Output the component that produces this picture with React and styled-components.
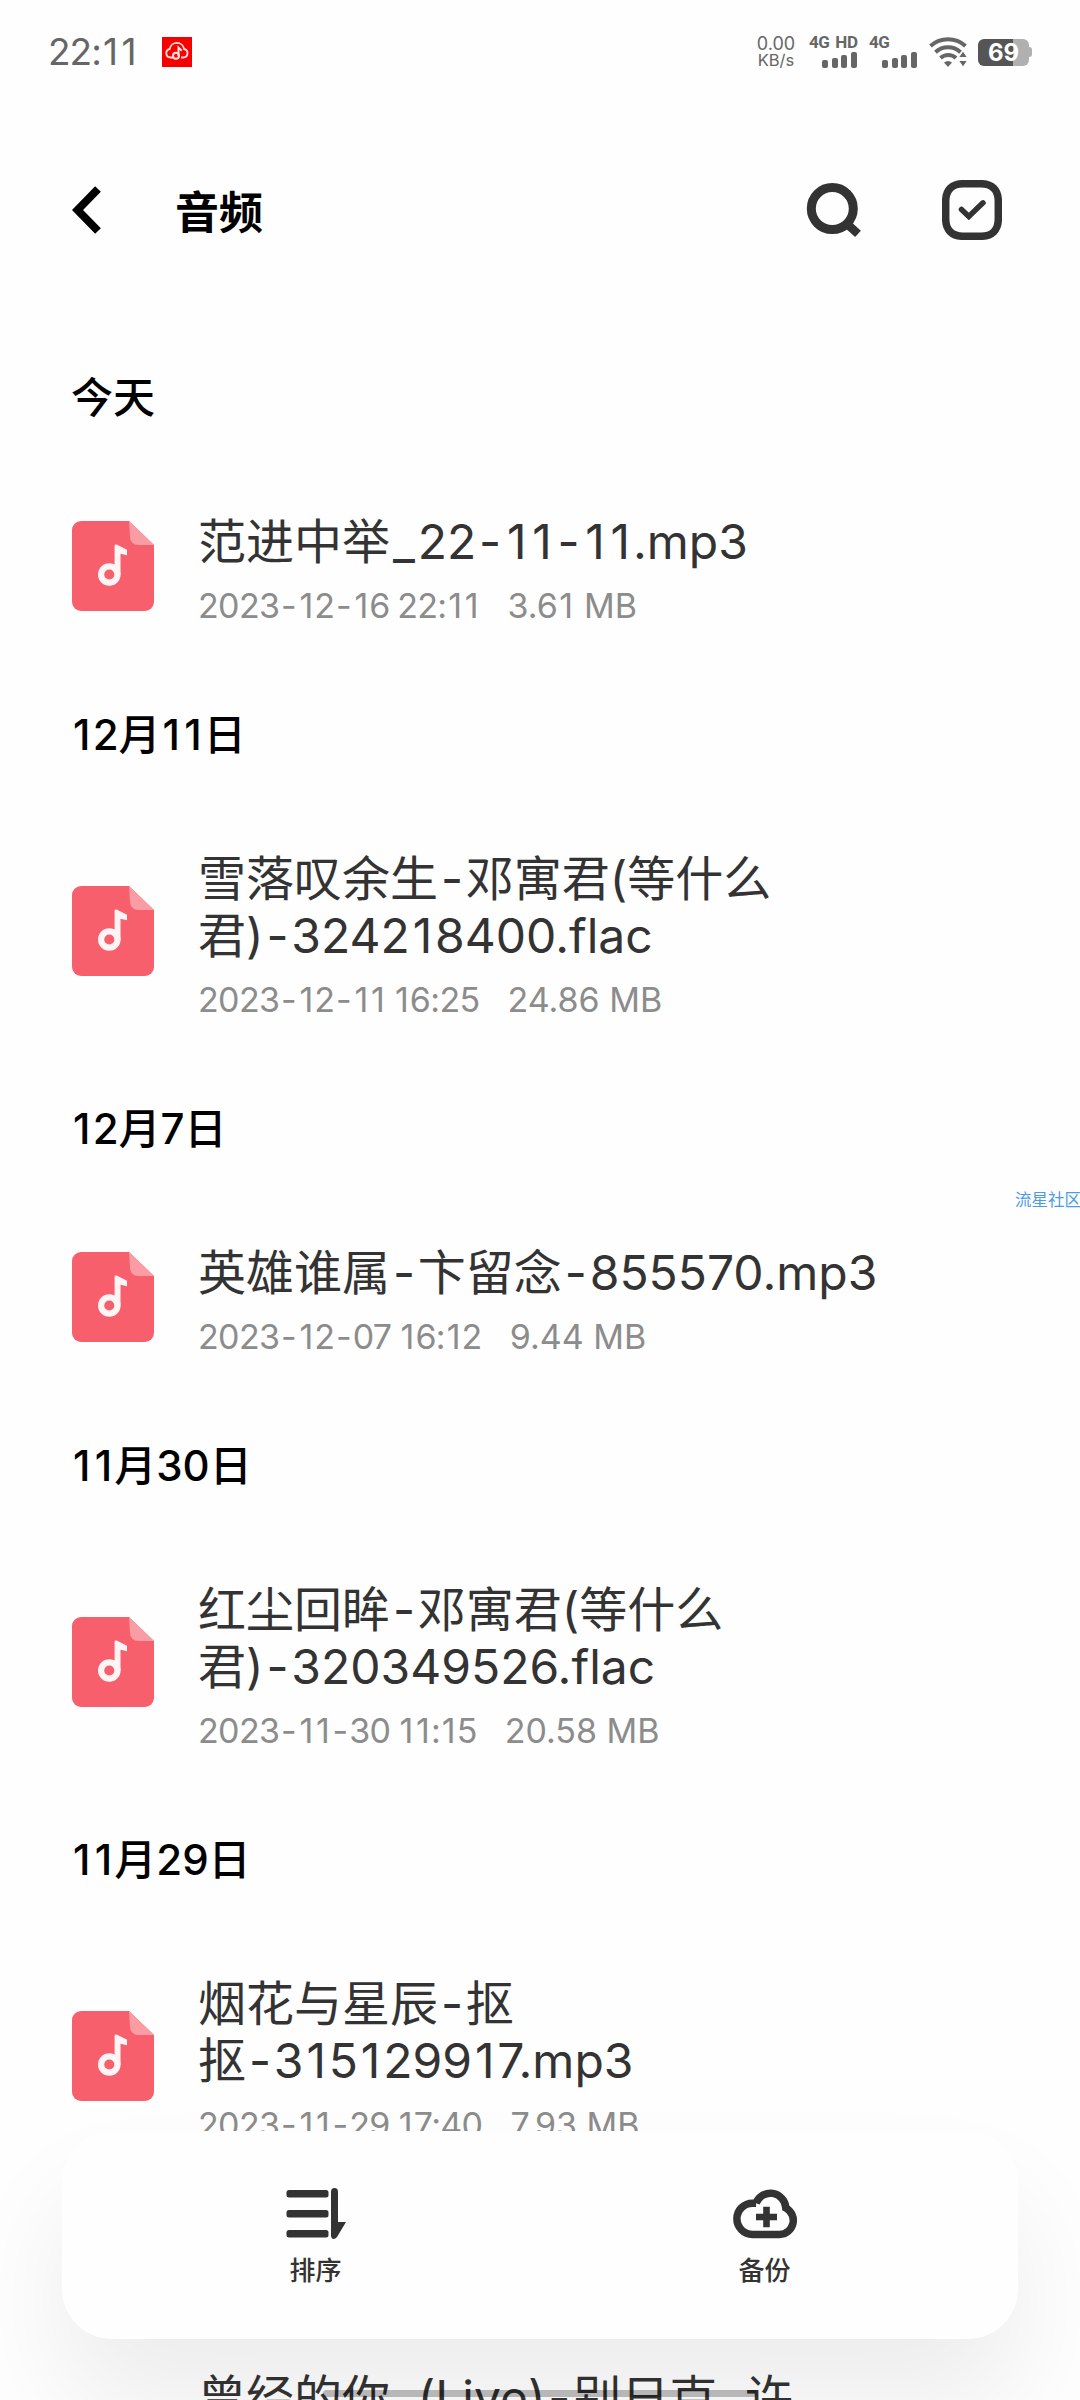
import React from 'react';
import styled, { createGlobalStyle } from 'styled-components';

const GlobalStyle = createGlobalStyle`
    * {
        box-sizing: border-box;
    }
    body {
        margin: 0;
        background-color: #fefefe;
        font-family: Inter, "Noto Sans CJK SC", sans-serif;
    }
`;

const Screen = styled.div`
    position: relative;
    width: 1080px;
    height: 2400px;
    overflow: hidden;
    display: flex;
    flex-direction: column;
    background-color: #fefefe;
`;

const StatusBar = styled.div`
    height: 104px;
    flex: none;
    padding: 0 48px 0 48px;
    display: flex;
    align-items: center;
    justify-content: space-between;
    color: #666;
`;

const StatusGroup = styled.div`
    display: flex;
    align-items: center;
`;

const Clock = styled.div`
    width: 114px;
    font-size: 37px;
    line-height: 44px;
    letter-spacing: -1px;
`;

const NetSpeed = styled.div`
    width: 42px;
    margin-right: 12px;
    display: flex;
    flex-direction: column;
    align-items: center;
    font-size: 18px;
    line-height: 17px;
`;

const NetUnit = styled.span`
    font-size: 16.5px;
`;

const Signal = styled.div`
    width: ${props => props.width}px;
    height: 32px;
    margin-right: ${props => props.gap}px;
    display: flex;
    flex-direction: column;
    justify-content: space-between;
`;

const SignalLabel = styled.div`
    font-family: Roboto, sans-serif;
    font-size: 17px;
    line-height: 13px;
    font-weight: 700;
    letter-spacing: -0.4px;
    word-spacing: 2px;
    white-space: nowrap;
`;

const Bars = styled.div`
    display: flex;
    align-items: flex-end;
    justify-content: flex-end;
    gap: 3.6px;
`;

const Bar = styled.div`
    width: 6px;
    height: ${props => props.height}px;
    border-radius: 2px;
    background-color: #666;
`;

const Battery = styled.div`
    width: 51px;
    height: 27px;
    margin-left: 10px;
    padding-top: 1px;
    border-radius: 6px;
    background: linear-gradient(to right, #555 35px, #b0b0b0 35px);
    display: flex;
    align-items: center;
    justify-content: center;
    font-size: 24px;
    line-height: 27px;
    font-weight: 700;
    color: #fff;
`;

const BatteryTip = styled.div`
    width: 3px;
    height: 10px;
    border-radius: 0 3px 3px 0;
    background-color: #b0b0b0;
`;

const Header = styled.div`
    height: 226px;
    flex: none;
    padding: 76px 78px 0 72px;
    display: flex;
    align-items: flex-start;
`;

const Title = styled.div`
    flex: 1;
    padding: 2px 0 0 73px;
    font-size: 44px;
    line-height: 62px;
    font-weight: 700;
    color: #000;
`;

const HeaderActions = styled.div`
    display: flex;
    gap: 78px;
`;

const DateHeading = styled.div`
    height: 136px;
    padding-left: 71px;
    font-size: 42px;
    line-height: 136px;
    font-weight: 500;
    color: #000;
`;

const FileRow = styled.div`
    height: ${props => 144 + props.lines * 57}px;
    padding: 0 0 2px 72px;
    display: flex;
    align-items: center;
`;

const FileInfo = styled.div`
    align-self: flex-start;
    padding: 47px 0 0 44px;
`;

const FileName = styled.div`
    font-size: 48px;
    line-height: 57px;
    white-space: nowrap;
    color: #333;
`;

const FileMeta = styled.div`
    padding-top: 14px;
    display: flex;
    gap: 28px;
    font-size: 34px;
    line-height: 44px;
    color: #8c8c8c;
`;

const FileTime = styled.span`
    letter-spacing: -0.65px;
    word-spacing: -1.5px;
`;

const Wide = styled.span`
    padding: 0 ${props => props.$pad / 2}em;
`;

const Dock = styled.div`
    position: absolute;
    left: 62px;
    top: 2131px;
    width: 956px;
    height: 208px;
    border-radius: 50px;
    background-color: #fefefe;
    box-shadow: 0 66px 110px rgba(0, 0, 0, 0.072);
    padding: 0 29px;
    display: flex;
`;

const DockButton = styled.div`
    flex: 1;
    padding-top: 50px;
    display: flex;
    flex-direction: column;
    align-items: center;
    font-size: 26px;
    line-height: 36px;
    font-weight: 500;
    color: #333;
`;

const DockIcon = styled.svg`
    width: 72px;
    height: 64px;
    margin-bottom: 8px;
`;

const HomePill = styled.div`
    position: absolute;
    left: 323px;
    top: 2390px;
    width: 434px;
    height: 7px;
    border-radius: 4px;
    background-color: rgba(0, 0, 0, 0.25);
`;

const Watermark = styled.div`
    position: absolute;
    left: 1015px;
    top: 1189px;
    font-size: 16.5px;
    line-height: 22px;
    white-space: nowrap;
    color: #4a9be8;
`;

const groups = [
    { date: '今天', name: ['范进中举_22-11-11.mp3'], lines: 1, time: '2023-12-16 22:11', size: '3.61 MB' },
    { date: '12月11日', name: ['雪落叹余生-邓寓君(等什么', '君)-324218400.flac'], lines: 2, time: '2023-12-11 16:25', size: '24.86 MB' },
    { date: '12月7日', name: ['英雄谁属-卞留念-855570.mp3'], lines: 1, time: '2023-12-07 16:12', size: '9.44 MB' },
    { date: '11月30日', name: ['红尘回眸-邓寓君(等什么', '君)-320349526.flac'], lines: 2, time: '2023-11-30 11:15', size: '20.58 MB' },
    { date: '11月29日', name: ['烟花与星辰-抠', '抠-315129917.mp3'], lines: 2, time: '2023-11-29 17:40', size: '7.93 MB' },
    { date: '11月28日', name: ['曾经的你_(Live)-别日克_许'], lines: 2, time: '', size: '' },
];

// gives the narrow glyphs (1, hyphen, underscore) some room on both sides
function Spaced({ text, pad = 0.12 }){
    return text.split(/([-_1])/).map((part, i) => (
        i % 2 ? <Wide key={i} $pad={pad}>{part}</Wide> : part
    ))}

function CloudMusicIcon(){
    return (
        <svg width="30" height="30" viewBox="0 0 30 30">
            <rect width="30" height="30" fill="#f80000" />
            <path d="M11 20.5H8.5a4.3 4.3 0 0 1-.8-8.5 7.3 7.3 0 0 1 14.4 0 4.3 4.3 0 0 1-.8 8.5H19" fill="none" stroke="#ffe3dc" strokeWidth="1.8" />
            <circle cx="14" cy="18.8" r="3" fill="none" stroke="#ffe3dc" strokeWidth="2" />
            <path d="M16.5 19V10.5l3.3 3.2" fill="none" stroke="#ffe3dc" strokeWidth="2" />
        </svg>
    )}

function WifiIcon(){
    return (
        <svg width="40" height="32" viewBox="0 0 40 32" fill="none" stroke="#666" strokeWidth="4">
            <path d="M2.500 10a26 26 0 0 1 35 0" />
            <path d="M7.500 16.2a18.5 18.5 0 0 1 25 0" />
            <path d="M12.500 22a11.5 11.5 0 0 1 15.5 0" />
            <path d="M16 26.5a6.5 6.5 0 0 1 8 0l-4 4.5z" fill="#666" stroke="none" />
            <path d="M35 15l4.500 6.500h-9zM35 31l4.500-6.500h-9z" fill="#666" stroke="#fefefe" strokeWidth="1" />
        </svg>
    )}

function BackIcon(){
    return (
        <svg width="30" height="60" viewBox="0 0 30 60">
            <path d="M26 9L5.5 30 26 51" fill="none" stroke="#000" strokeWidth="8" />
        </svg>
    )}

function SearchIcon(){
    return (
        <svg width="60" height="60" viewBox="0 0 60 60" fill="none" stroke="#333" strokeWidth="9">
            <circle cx="28.3" cy="28.6" r="21" />
            <path d="M42 43l12 10.8" strokeWidth="8.5" />
        </svg>
    )}

function SelectIcon(){
    return (
        <svg width="60" height="60" viewBox="0 0 60 60" fill="none" stroke="#333">
            <path d="M21 3.7h18C50 3.7 56.3 10 56.3 21v18C56.3 50 50 56.3 39 56.3H21C10 56.3 3.7 50 3.7 39V21C3.7 10 10 3.7 21 3.7z" strokeWidth="7.5" />
            <path d="M19.5 29.5l7.3 7L41 22.8" strokeWidth="5.5" strokeLinecap="round" />
        </svg>
    )}

function AudioFileIcon(){
    return (
        <svg width="82" height="90" viewBox="0 0 82 90">
            <path d="M9 0h48l25 24v57a9 9 0 0 1-9 9H9a9 9 0 0 1-9-9V9a9 9 0 0 1 9-9z" fill="#f75f6d" />
            <path d="M57 0l25 24H66a8 8 0 0 1-8-8z" fill="#fa9ca4" />
            <circle cx="37.3" cy="53.5" r="8.2" fill="none" stroke="#fff5f5" strokeWidth="6.2" />
            <path d="M42.6 24.5q.3-1.5 2-1L55 28.7v5.6l-6.5-1.5V54h-5.9z" fill="#fff5f5" />
        </svg>
    )}

function File({ file }){
    return (
        <FileRow lines={file.lines}>
            <AudioFileIcon />
            <FileInfo>
                {file.name.map(line => <FileName key={line}><Spaced text={line} /></FileName>)}
                <FileMeta>
                    <FileTime><Spaced text={file.time} pad={0.1} /></FileTime>
                    <span><Spaced text={file.size} pad={0.08} /></span>
                </FileMeta>
            </FileInfo>
        </FileRow>
    )}

function SignalBars(){
    return (
        <Bars>
            {[8, 10, 13, 16].map(height => <Bar key={height} height={height} />)}
        </Bars>
    )}

function App(){
    return (
        <Screen>
            <GlobalStyle />
            <StatusBar>
                <StatusGroup>
                    <Clock><Spaced text="22:11" /></Clock>
                    <CloudMusicIcon />
                </StatusGroup>
                <StatusGroup>
                    <NetSpeed>
                        <span>0.00</span>
                        <NetUnit>KB/s</NetUnit>
                    </NetSpeed>
                    <Signal width={48} gap={12}>
                        <SignalLabel>4G HD</SignalLabel>
                        <SignalBars />
                    </Signal>
                    <Signal width={48} gap={11}>
                        <SignalLabel>4G</SignalLabel>
                        <SignalBars />
                    </Signal>
                    <WifiIcon />
                    <Battery>69</Battery>
                    <BatteryTip />
                </StatusGroup>
            </StatusBar>
            <Header>
                <BackIcon />
                <Title>音频</Title>
                <HeaderActions>
                    <SearchIcon />
                    <SelectIcon />
                </HeaderActions>
            </Header>
            {groups.map(group => (
                <div key={group.date}>
                    <DateHeading><Spaced text={group.date} pad={0.1} /></DateHeading>
                    <File file={group} />
                </div>
            ))}
            <Watermark>流星社区</Watermark>
            <Dock>
                <DockButton>
                    <DockIcon viewBox="0 0 72 64" fill="#333">
                        <rect x="6.5" y="9" width="42" height="7.5" rx="2.5" />
                        <rect x="6.5" y="29" width="42" height="7.5" rx="2.5" />
                        <rect x="6.5" y="49" width="42" height="7.5" rx="2.5" />
                        <path d="M51 11q0-4 3.5-4t3.500 4v30h8l-9 15q-1.500 2-3.500 2t-2.500-3z" />
                    </DockIcon>
                    排序
                </DockButton>
                <DockButton>
                    <DockIcon viewBox="0 0 72 64" fill="none" stroke="#333" strokeWidth="7.5">
                        <path d="M27 22.2H23.5A15.6 15.6 0 0 0 23.5 53.4H50.5A14 14 0 0 0 56.8 27A15.4 15.4 0 0 0 27 22.2" />
                        <path d="M27 36h21M37.5 25.7v20.5" strokeWidth="6.6" />
                    </DockIcon>
                    备份
                </DockButton>
            </Dock>
            <HomePill />
        </Screen>
    )}
export default App;
